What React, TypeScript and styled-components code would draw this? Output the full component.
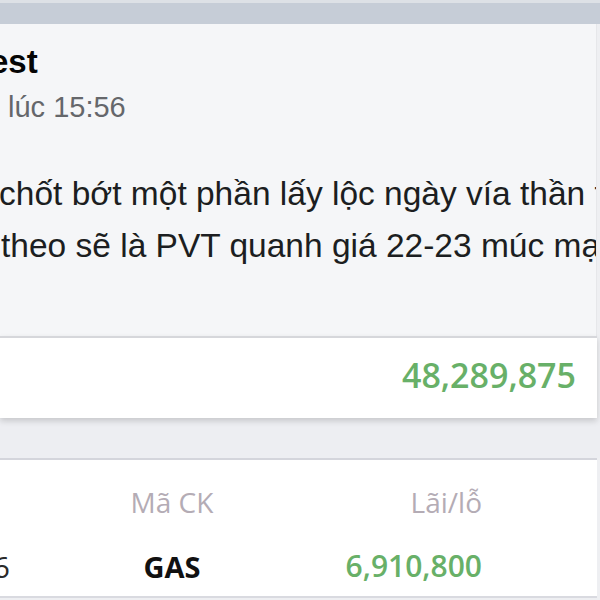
import React from "react";
import styled, { createGlobalStyle } from "styled-components";

const GlobalStyle = createGlobalStyle`
  html, body {
    margin: 0;
    padding: 0;
    background: #eeeff2;
  }
  #root {
    width: 600px;
    height: 600px;
    overflow: hidden;
  }
`;

const Page = styled.div`
  width: 600px;
  height: 600px;
  overflow: hidden;
  display: flex;
  flex-direction: column;
  background: #eeeff2;
`;

const TopBar = styled.div`
  height: 21px;
  flex-shrink: 0;
  background: #c6cdd7;
  border-top: 3px solid #dde1e6;
`;

const PostCard = styled.div`
  flex-shrink: 0;
  height: 312px;
  box-sizing: border-box;
  padding: 18px 0 0 0;
  background: #f5f6f8;
  border-right: 1px solid #e6e7ea;
  width: 597px;
  font-family: "Liberation Sans", Arial, sans-serif;
  overflow: hidden;
`;

const AuthorName = styled.div`
  font-size: 33px;
  font-weight: 700;
  line-height: 40px;
  color: #050505;
  margin-left: -10px;
  white-space: nowrap;
`;

const TimeStamp = styled.div`
  margin-top: 8px;
  padding-left: 8px;
  font-size: 29px;
  line-height: 34px;
  color: #65676b;
  white-space: nowrap;
`;

const Body = styled.div`
  margin-top: 44px;
  display: flex;
  flex-direction: column;
`;

const BodyLine = styled.div<{ $shift?: number }>`
  font-size: 33.5px;
  line-height: 52px;
  color: #1c1e21;
  white-space: nowrap;
  margin-left: ${(p) => p.$shift ?? 0}px;
`;

const TotalRow = styled.div`
  flex-shrink: 0;
  height: 82px;
  box-sizing: border-box;
  width: 597px;
  border-top: 2px solid #d6d7db;
  background: #ffffff;
  display: flex;
  align-items: center;
  justify-content: flex-end;
  padding: 0 21px 6px 0;
  box-shadow: 0 3px 6px rgba(0, 0, 0, 0.16);
  position: relative;
  z-index: 1;
  font-family: "Open Sans", sans-serif;
`;

const Profit = styled.span<{ $size: number }>`
  font-size: ${(p) => p.$size}px;
  font-weight: 600;
  color: #68b068;
  line-height: 1;
`;

const Gap = styled.div`
  height: 40px;
  flex-shrink: 0;
  background: #edeef2;
`;

const Table = styled.div`
  flex-shrink: 0;
  width: 597px;
  background: #ffffff;
  border-top: 2px solid #d4d5dc;
  border-bottom: 2px solid #d9dae0;
  padding: 22px 0 10px;
  display: grid;
  grid-template-columns: 10px 324px 148px 1fr;
  grid-auto-rows: 40px;
  row-gap: 24px;
  font-family: "Open Sans", sans-serif;
`;

const Cell = styled.div<{ $align: "start" | "center" | "end" }>`
  display: flex;
  align-items: center;
  white-space: nowrap;
  justify-content: ${(p) =>
    p.$align === "start" ? "flex-start" : p.$align === "end" ? "flex-end" : "center"};
`;

const HeadText = styled.span`
  font-size: 28px;
  color: #b4acb5;
`;

const Amount = styled.span`
  font-size: 30px;
  color: #2a2a2a;
`;

const Ticker = styled.span`
  font-size: 29px;
  font-weight: 700;
  color: #111111;
`;

export default function App() {
  return (
    <Page>
      <GlobalStyle />
      <TopBar />
      <PostCard>
        <AuthorName>est</AuthorName>
        <TimeStamp>lúc 15:56</TimeStamp>
        <Body>
          <BodyLine $shift={-1}>chốt bớt một phần lấy lộc ngày vía thần tài</BodyLine>
          <BodyLine $shift={1}>theo sẽ là PVT quanh giá 22-23 múc mạnh</BodyLine>
        </Body>
      </PostCard>
      <TotalRow>
        <Profit $size={34}>48,289,875</Profit>
      </TotalRow>
      <Gap />
      <Table>
        <Cell $align="end" />
        <Cell $align="center">
          <HeadText>Mã CK</HeadText>
        </Cell>
        <Cell $align="end">
          <HeadText>Lãi/lỗ</HeadText>
        </Cell>
        <Cell $align="start" />

        <Cell $align="end">
          <Amount>1,836</Amount>
        </Cell>
        <Cell $align="center">
          <Ticker>GAS</Ticker>
        </Cell>
        <Cell $align="end">
          <Profit $size={30}>6,910,800</Profit>
        </Cell>
        <Cell $align="start" />
      </Table>
    </Page>
  );
}
